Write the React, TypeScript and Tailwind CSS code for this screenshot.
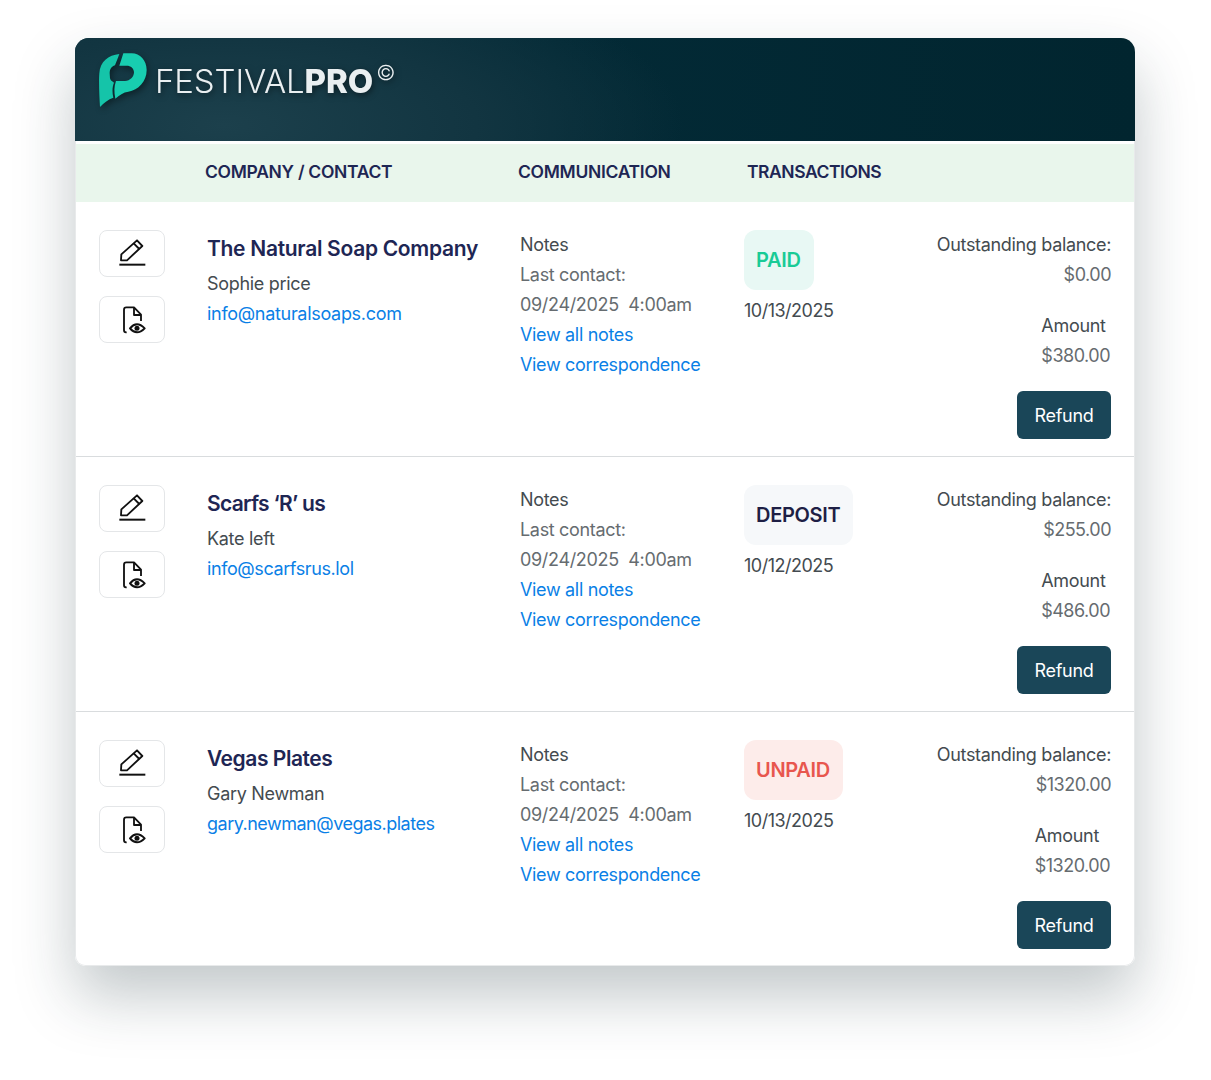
const rows = [
  {
    company: 'The Natural Soap Company',
    companyTrack: 'tracking-[-0.3px]',
    contact: 'Sophie price',
    email: 'info@naturalsoaps.com',
    emailTrack: 'tracking-[-0.3px]',
    status: 'PAID',
    badge: 'bg-[#e8f8f4] text-[#19cb96]',
    date: '10/13/2025',
    balance: '$0.00',
    amount: '$380.00',
  },
  {
    company: 'Scarfs ‘R’ us',
    companyTrack: 'tracking-[-0.7px]',
    contact: 'Kate left',
    email: 'info@scarfsrus.lol',
    emailTrack: 'tracking-[-0.4px]',
    status: 'DEPOSIT',
    badge: 'bg-[#f6f8fa] text-[#1e1f45]',
    date: '10/12/2025',
    balance: '$255.00',
    amount: '$486.00',
  },
  {
    company: 'Vegas Plates',
    companyTrack: 'tracking-[-0.45px]',
    contact: 'Gary Newman',
    email: 'gary.newman@vegas.plates',
    emailTrack: 'tracking-[-0.5px]',
    status: 'UNPAID',
    badge: 'bg-[#fdecea] text-[#e8564e]',
    date: '10/13/2025',
    balance: '$1320.00',
    amount: '$1320.00',
  },
];

const EditIcon = () => (
  <svg width="30" height="30" viewBox="20 5 90 90" fill="none" stroke="#111" strokeWidth="5.5" strokeLinejoin="round" className="mb-[4px]">
    <path d="M32 75 L33 57 L80 15 L96 32 L50 75 Z" />
    <path d="M70 24 L87 41" />
    <path d="M27 88 H105" strokeWidth="6" />
  </svg>
);

const FileEyeIcon = () => (
  <svg width="28" height="32" viewBox="30 205 84 96" fill="none" stroke="#111" strokeWidth="5.5" strokeLinejoin="round" className="ml-[4px]">
    <path d="M50 290 H48 Q42 290 42 284 V222 Q42 215 49 215 H72 L93 237 V256" />
    <path d="M72 215 V238 H93" />
    <path d="M60 278 Q80 254 104 278 Q80 302 60 278 Z" strokeWidth="6" />
    <circle cx="81" cy="278" r="7.5" fill="#111" stroke="none" />
  </svg>
);

const Logo = () => (
  <svg width="70" height="70" viewBox="0 0 210 210" className="shrink-0 drop-shadow-[2px_3px_3px_rgba(0,0,0,0.4)]">
    <path
      d="M30 186 C28 155 26 110 28 85 C30 50 55 30 88 27 C84 38 80 48 75 61 C64 64 59 74 59 85 L60 100 C62 108 68 110 72 113 C67 125 66 140 70 158 C55 163 42 173 30 186 Z"
      fill="#15c4a9"
    />
    <path
      d="M100 25 H125 C150 25 170 46 170 75 C170 110 145 135 115 140 C100 142 88 150 76 161 C72 140 72 125 78 108 L105 108 C120 108 132 95 132 82 C132 70 122 62 110 62 L88 62 C92 50 96 38 100 25 Z"
      fill="#18cdb0"
    />
  </svg>
);

export default function App() {
  return (
    <div className="min-h-[1080px] bg-white pt-[38px] pl-[75px] font-['Inter',sans-serif]">
      <div className="w-[1060px] h-[928px] rounded-t-[14px] rounded-b-[10px] bg-white shadow-[0_30px_60px_rgba(30,50,60,0.27)] overflow-hidden">
        {/* Header */}
        <div className="h-[103px] bg-[radial-gradient(ellipse_460px_170px_at_14%_85%,#1c404c_0%,#123541_55%,transparent_100%),linear-gradient(90deg,#0d323e_0%,#032a36_45%,#01252f_100%)] pl-[15px] pt-[7px] flex items-start">
          <Logo />
          <div className="-ml-[5px] mt-[16px] text-[33px] leading-[40px] text-[#eaeff1] tracking-[-0.1px] font-light whitespace-nowrap drop-shadow-[1px_2px_3px_rgba(0,0,0,0.5)]">
            FESTIVAL<span className="font-extrabold">PRO</span>
            <span className="ml-[3px] text-[21px] font-light align-[13px] leading-none">©</span>
          </div>
        </div>

        <div className="h-[825px] pt-[3px] border-x border-b border-[#e8eaeb] rounded-b-[10px]">
          {/* Column titles */}
          <div className="h-[58px] pb-[2px] bg-[#e9f6ec] flex items-center text-[17.5px] font-semibold text-[#1e2654] tracking-[-0.3px]">
            <div className="w-[442px] pl-[129px]">COMPANY / CONTACT</div>
            <div className="w-[229px]">COMMUNICATION</div>
            <div className="tracking-[-0.45px]">TRANSACTIONS</div>
          </div>

          {rows.map((row, i) => (
            <div
              key={row.company}
              className={`h-[255px] flex pt-[28px] border-[#d9dcde] ${i < 2 ? 'border-b' : ''}`}
            >
              {/* Actions */}
              <div className="w-[131px] pl-[23px] flex flex-col gap-[19px]">
                <button className="w-[66px] h-[47px] rounded-lg border border-[#e4e6e8] flex items-center justify-center">
                  <EditIcon />
                </button>
                <button className="w-[66px] h-[47px] rounded-lg border border-[#e4e6e8] flex items-center justify-center">
                  <FileEyeIcon />
                </button>
              </div>

              {/* Company */}
              <div className="w-[313px] pt-[4px]">
                <div className={`text-[21px] leading-[30px] font-semibold text-[#1e2654] whitespace-nowrap ${row.companyTrack}`}>{row.company}</div>
                <div className="mt-[5px] text-[18px] leading-[30px] text-[#444b50] tracking-[-0.3px]">{row.contact}</div>
                <a href="#" className={`block text-[18px] leading-[30px] text-[#0a7fe6] ${row.emailTrack}`}>{row.email}</a>
              </div>

              {/* Communication */}
              <div className="w-[224px] text-[18px] leading-[30px] tracking-[-0.33px]">
                <div className="text-[#444b50]">Notes</div>
                <div className="text-[#666c70]">Last contact:</div>
                <div className="text-[#666c70] whitespace-pre">09/24/2025  4:00am</div>
                <a href="#" className="block text-[#0a7fe6]">View all notes</a>
                <a href="#" className="block text-[#0a7fe6]">View correspondence</a>
              </div>

              {/* Status */}
              <div className="w-[150px]">
                <div className={`inline-flex items-center h-[60px] pl-[12px] pr-[13px] rounded-xl text-[20px] font-semibold tracking-[-0.3px] ${row.badge}`}>
                  {row.status}
                </div>
                <div className="mt-[6px] text-[18px] leading-[30px] text-[#444b50] tracking-[-0.5px]">{row.date}</div>
              </div>

              {/* Amounts */}
              <div className="flex-1 pr-[23px] flex flex-col items-end text-[18px] leading-[30px] -ml-[40px] whitespace-nowrap">
                <div className="text-[#444b50] tracking-[-0.33px]">Outstanding balance:</div>
                <div className="text-[#666c70] tracking-[-0.5px]">{row.balance}</div>
                <div className="mt-[21px] mr-px flex flex-col items-start">
                  <div className="text-[#444b50] tracking-[-0.3px]">Amount</div>
                  <div className="text-[#666c70] tracking-[-0.5px]">{row.amount}</div>
                </div>
                <button className="mt-[20px] pt-px w-[94px] h-[48px] rounded-md bg-[#1a4658] text-white tracking-[-0.3px]">Refund</button>
              </div>
            </div>
          ))}
        </div>
      </div>
    </div>
  );
}
